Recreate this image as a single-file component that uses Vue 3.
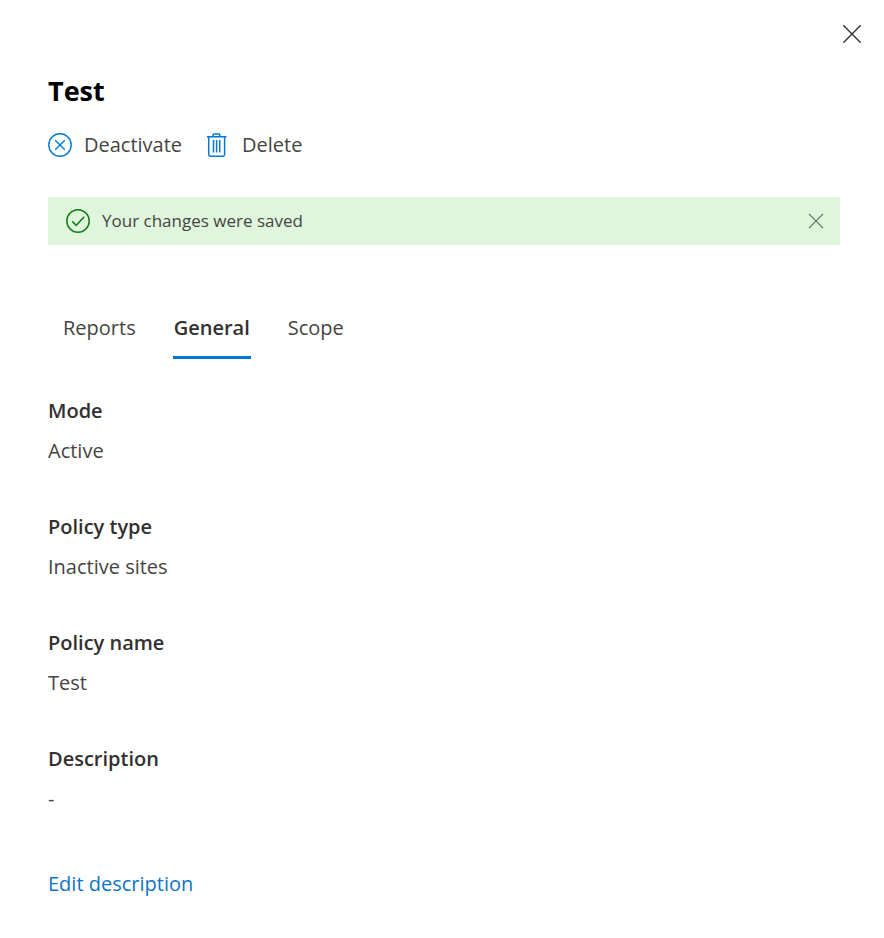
<script setup>
import { ref } from 'vue'

const open = ref(true)
const showSaved = ref(true)
const tabs = ['Reports', 'General', 'Scope']
const active = ref('General')
const fields = [
  { label: 'Mode', value: 'Active' },
  { label: 'Policy type', value: 'Inactive sites' },
  { label: 'Policy name', value: 'Test' },
  { label: 'Description', value: '-' },
]
</script>

<template>
  <main v-if="open" class="panel">
    <div class="topbar">
      <button class="icon-btn close" type="button" aria-label="Close" @click="open = false">
        <svg width="20" height="20" viewBox="0 0 20 20" fill="none" stroke="currentColor" stroke-width="1.4">
          <path d="M1.3 1.3l17.4 17.4M18.7 1.3l-17.4 17.4" />
        </svg>
      </button>
    </div>

    <div class="body">
      <h1>Test</h1>

      <div class="actions">
        <button class="action" type="button">
          <svg width="24" height="24" viewBox="0 0 24 24" fill="none" stroke="currentColor" stroke-width="1.4">
            <circle cx="12" cy="12" r="11.2" />
            <path d="M7.2 7.2l9.6 9.6M16.8 7.2l-9.6 9.6" />
          </svg>
          <span>Deactivate</span>
        </button>
        <button class="action" type="button">
          <svg width="24" height="24" viewBox="0 0 24 24" fill="none" stroke="currentColor" stroke-width="1.5">
            <path d="M1 3.7h19.4M7.2 3.5V1.8c0-.5.3-.8.8-.8h5c.5 0 .8.3.8.8v1.7" />
            <path d="M2.7 3.7v17.8c0 1 .6 1.7 1.6 1.7h12.7c1 0 1.6-.7 1.6-1.7V3.7" />
            <path d="M7.5 7v12.5M10.6 7v12.5M13.7 7v12.5" />
          </svg>
          <span>Delete</span>
        </button>
      </div>

      <div v-if="showSaved" class="banner" role="status">
        <svg class="check" width="24" height="24" viewBox="0 0 24 24" fill="none" stroke="currentColor" stroke-width="1.5">
          <circle cx="12" cy="12" r="11.2" />
          <path d="M6.2 12.3l4 4 8-8.6" />
        </svg>
        <span class="message">Your changes were saved</span>
        <button class="icon-btn dismiss" type="button" aria-label="Dismiss" @click="showSaved = false">
          <svg width="16" height="16" viewBox="0 0 16 16" fill="none" stroke="currentColor" stroke-width="1.2">
            <path d="M1 1l14 14M15 1l-14 14" />
          </svg>
        </button>
      </div>

      <div class="tabs" role="tablist">
        <button
          v-for="tab in tabs"
          :key="tab"
          class="tab"
          :class="{ selected: tab === active }"
          type="button"
          role="tab"
          :aria-selected="tab === active"
          @click="active = tab"
        >{{ tab }}</button>
      </div>

      <dl class="fields">
        <div v-for="field in fields" :key="field.label" class="field">
          <dt>{{ field.label }}</dt>
          <dd>{{ field.value }}</dd>
        </div>
      </dl>

      <a class="edit" href="#edit">Edit description</a>
    </div>
  </main>
</template>

<style>
body {
  background: #fff;
}
</style>

<style scoped>
.panel {
  box-sizing: border-box;
  padding-bottom: 40px;
  font-family: "Open Sans", "Noto Sans", sans-serif;
  font-size: 20px;
  line-height: 28px;
  color: #454443;
}
button {
  margin: 0;
  padding: 0;
  border: 0;
  background: none;
  font: inherit;
  color: inherit;
  cursor: pointer;
}
svg {
  display: block;
  flex: none;
}
.topbar {
  display: flex;
  justify-content: flex-end;
  padding: 14px 12px 0 0;
}
.icon-btn {
  display: flex;
  align-items: center;
  justify-content: center;
  width: 40px;
  height: 40px;
}
.close {
  color: #323130;
}
.body {
  padding: 17px 44px 0 48px;
}
h1 {
  margin: 0;
  font-size: 27px;
  line-height: 40px;
  font-weight: 700;
  color: #000;
}
.actions {
  display: flex;
  gap: 24px;
  padding: 20px 0 38px;
}
.action {
  display: flex;
  align-items: center;
  gap: 12px;
}
.action svg {
  color: #0078d4;
}
.banner {
  display: flex;
  align-items: center;
  gap: 12px;
  height: 48px;
  padding: 0 4px 0 18px;
  background: #dff6dd;
}
.check {
  color: #107c10;
}
.message {
  flex: 1;
  font-size: 17px;
}
.dismiss {
  color: #6b7b6a;
}
.tabs {
  display: flex;
  gap: 36px;
  padding: 55px 0 38px 14px;
}
.tab {
  height: 59px;
  padding: 0 1px;
  border-bottom: 3px solid transparent;
}
.tab.selected {
  border-color: #0078d4;
  font-weight: 600;
  color: #323130;
}
.fields {
  display: flex;
  flex-direction: column;
  gap: 48px;
  margin: 0;
}
.field {
  display: flex;
  flex-direction: column;
  gap: 12px;
}
dt {
  font-weight: 600;
  color: #323130;
}
dd {
  margin: 0;
}
.edit {
  display: inline-block;
  margin-top: 57px;
  color: #0f73c7;
  text-decoration: none;
}
</style>
